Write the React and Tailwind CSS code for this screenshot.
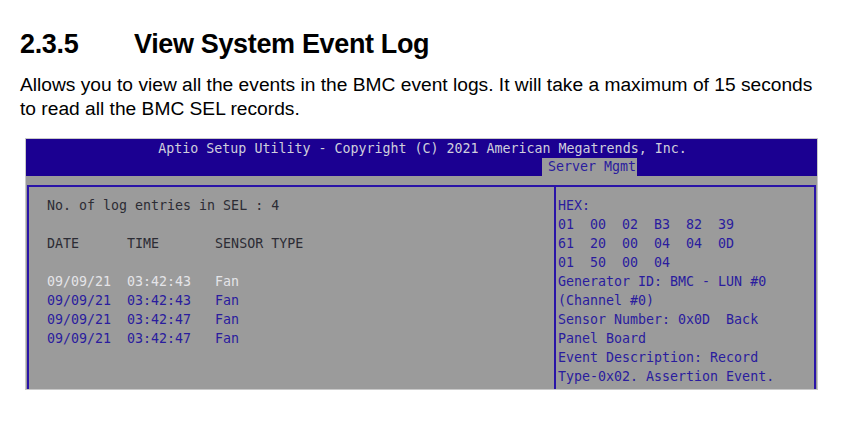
import React from 'react';

const leftLines = [
  { text: 'No. of log entries in SEL : 4', tone: 'dark' },
  { text: '', tone: 'dark' },
  { text: 'DATE      TIME       SENSOR TYPE', tone: 'dark' },
  { text: '', tone: 'dark' },
  { text: '09/09/21  03:42:43   Fan', tone: 'light' },
  { text: '09/09/21  03:42:43   Fan', tone: 'blue' },
  { text: '09/09/21  03:42:47   Fan', tone: 'blue' },
  { text: '09/09/21  03:42:47   Fan', tone: 'blue' },
];

const rightLines = [
  'HEX:',
  '01  00  02  B3  82  39',
  '61  20  00  04  04  0D',
  '01  50  00  04',
  'Generator ID: BMC - LUN #0',
  '(Channel #0)',
  'Sensor Number: 0x0D  Back',
  'Panel Board',
  'Event Description: Record',
  'Type-0x02. Assertion Event.',
];

const toneClass = {
  dark: 'text-[#2c2c34]',
  light: 'text-[#e4e4e8]',
  blue: 'text-[#2a1c9e]',
};

const mono = { fontFamily: '"DejaVu Sans Mono", "Liberation Mono", monospace' };

const BiosScreen = () => (
  <div
    className="mx-[25px] h-[252px] overflow-hidden border border-[#c9c9c9] bg-[#9b9b9b] text-[13.3px] leading-[19px]"
    style={mono}
  >
    {/* title bar with the active tab */}
    <div className="flex h-[37px] flex-col bg-[#1b0091]">
      <div className="h-[19px] whitespace-pre pl-[2px] text-center text-[#cfcfdc]">
        Aptio Setup Utility - Copyright (C) 2021 American Megatrends, Inc.
      </div>
      <div className="flex h-[18px] pl-[516px]">
        <div className="h-[18px] w-[95px] whitespace-nowrap bg-[#9b9b9b] pl-[6px] leading-[18px] text-[#2a1c9e]">
          Server Mgmt
        </div>
      </div>
    </div>

    <div className="h-[9px]" />

    {/* framed panel, bottom cut off by the crop */}
    <div className="mx-[1px] flex h-[210px] border-x-2 border-t-2 border-[#2a14a8]">
      <div className="w-[525px] whitespace-pre pl-[18px] pt-[9px]">
        {leftLines.map((line, i) => (
          <div key={i} className={`h-[19px] ${toneClass[line.tone]}`}>
            {line.text}
          </div>
        ))}
      </div>
      <div className="flex-1 whitespace-pre border-l-2 border-[#2a14a8] pl-[2px] pt-[9px] text-[#2a1c9e]">
        {rightLines.map((line, i) => (
          <div key={i} className="h-[19px]">
            {line}
          </div>
        ))}
      </div>
    </div>
  </div>
);

export default function App() {
  return (
    <div
      className="h-[434px] w-[843px] overflow-hidden bg-white text-black"
      style={{ fontFamily: '"Liberation Sans", Arial, sans-serif' }}
    >
      <h2 className="flex pl-[20px] pt-[27px] text-[27px] font-bold leading-[34px] tracking-[-0.35px]">
        <span className="w-[114px]">2.3.5</span>
        <span>View System Event Log</span>
      </h2>
      <p className="mt-[12px] pl-[20px] pr-[10px] text-[19.2px] leading-[24px]">
        Allows you to view all the events in the BMC event logs. It will take a maximum of 15 seconds
        <br />
        to read all the BMC SEL records.
      </p>
      <div className="h-[17px]" />
      <BiosScreen />
    </div>
  );
}
